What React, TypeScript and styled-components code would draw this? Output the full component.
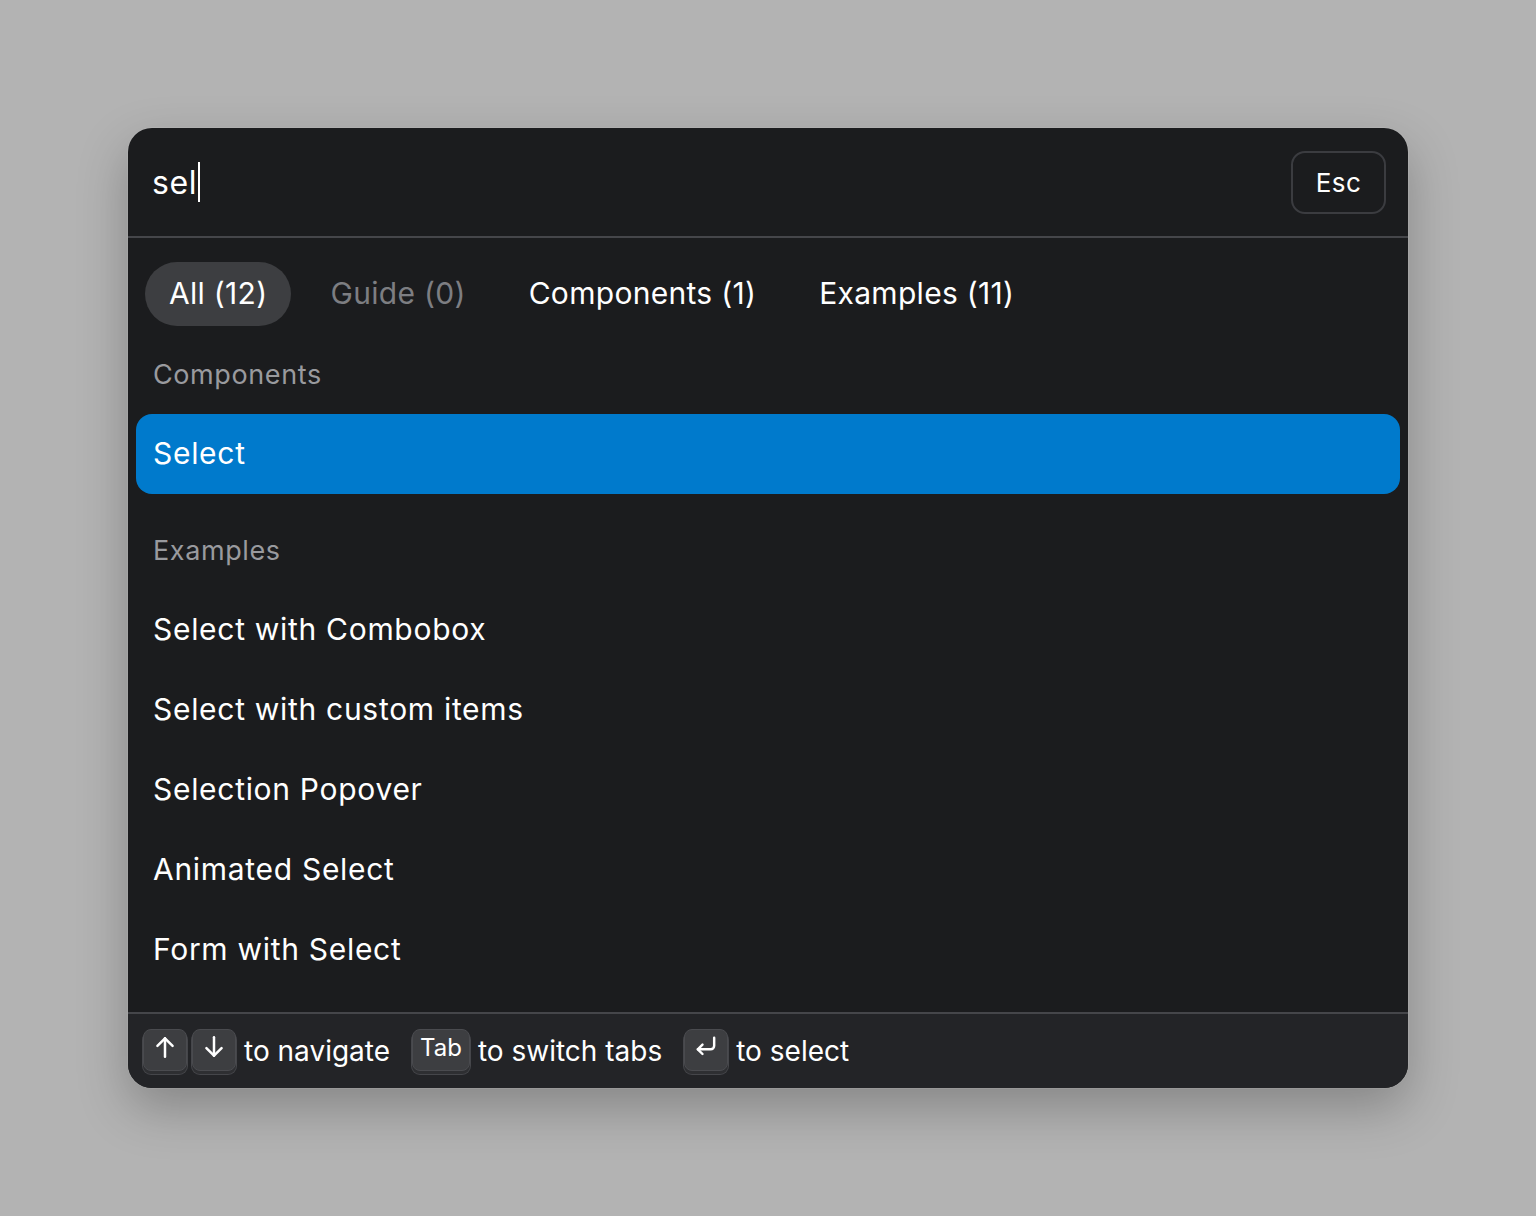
import styled, { createGlobalStyle } from "styled-components";

const GlobalStyle = createGlobalStyle`
  html, body {
    margin: 0;
    padding: 0;
    background: #b3b3b3;
    font-family: Inter, "Noto Sans", sans-serif;
  }
`;

const Page = styled.div`
  width: 1536px;
  height: 1216px;
  display: flex;
  align-items: flex-start;
  justify-content: center;
  padding-top: 128px;
  box-sizing: border-box;
`;

const Dialog = styled.div`
  width: 1280px;
  height: 960px;
  background: #1b1c1e;
  border-radius: 24px;
  box-shadow: 0 0 0 1px rgba(255, 255, 255, 0.08), 0 20px 50px rgba(0, 0, 0, 0.25);
  display: flex;
  flex-direction: column;
  overflow: hidden;
`;

const Header = styled.div`
  height: 108px;
  display: flex;
  align-items: center;
  justify-content: space-between;
  padding: 0 22px 0 24px;
  border-bottom: 2px solid #45464a;
  flex-shrink: 0;
`;

const InputText = styled.div`
  color: #ffffff;
  font-size: 32px;
  letter-spacing: 0.6px;
  display: flex;
  align-items: center;
`;

const Caret = styled.span`
  display: inline-block;
  width: 2px;
  height: 40px;
  background: #ffffff;
  margin-left: 1px;
`;

const EscButton = styled.div`
  width: 95px;
  height: 63px;
  box-sizing: border-box;
  border: 2px solid #3b3c40;
  border-radius: 14px;
  color: #ffffff;
  font-size: 26px;
  letter-spacing: 0.4px;
  display: flex;
  align-items: center;
  justify-content: center;
`;

const Body = styled.div`
  flex: 1;
  display: flex;
  flex-direction: column;
  padding: 24px 8px 0;
`;

const Tabs = styled.div`
  display: flex;
  gap: 15px;
  padding-left: 9px;
`;

const Tab = styled.div<{ $active?: boolean; $muted?: boolean }>`
  height: 64px;
  padding: 0 24px 3px;
  box-sizing: border-box;
  border-radius: 32px;
  display: flex;
  align-items: center;
  font-size: 30px;
  letter-spacing: 0.3px;
  color: ${(p) => (p.$muted ? "#7d7e82" : "#ffffff")};
  background: ${(p) => (p.$active ? "#3d3e41" : "transparent")};
`;

const SectionLabel = styled.div`
  height: 88px;
  box-sizing: border-box;
  display: flex;
  align-items: center;
  padding: 8px 0 0 17px;
  font-size: 27px;
  letter-spacing: 0.6px;
  color: #999a9e;
`;

const Item = styled.div<{ $selected?: boolean }>`
  height: 80px;
  box-sizing: border-box;
  display: flex;
  align-items: center;
  padding: 0 0 3px 17px;
  border-radius: 16px;
  font-size: 30px;
  letter-spacing: 0.7px;
  color: #ffffff;
  background: ${(p) => (p.$selected ? "#007acc" : "transparent")};
`;

const Gap = styled.div`
  height: 8px;
`;

const Footer = styled.div`
  height: 74px;
  flex-shrink: 0;
  background: #232427;
  border-top: 2px solid #45464a;
  display: flex;
  align-items: center;
  padding: 0 15px;
  gap: 22px;
  color: #ffffff;
  font-size: 28px;
`;

const Hint = styled.div`
  display: flex;
  align-items: center;
  gap: 8px;
`;

const Keys = styled.div`
  display: flex;
  gap: 5px;
`;

const Key = styled.div<{ $wide?: boolean }>`
  height: 42px;
  min-width: 44px;
  padding: 0 ${(p) => (p.$wide ? "7px" : "0")} 5px;
  box-sizing: border-box;
  border-radius: 8px;
  background: #3d3e41;
  border: 1px solid #4a4b4f;
  box-shadow: 0 3px 0 #2e2f32, 0 3px 0 1px #45464a;
  display: flex;
  align-items: center;
  justify-content: center;
  color: #ffffff;
  font-size: 24px;
  margin-bottom: 3px;
`;

const Arrow = ({ down }: { down?: boolean }) => (
  <svg width="26" height="26" viewBox="0 0 24 24" fill="none" stroke="#fff" strokeWidth="2.3" strokeLinecap="round" strokeLinejoin="round">
    {down ? (
      <>
        <path d="M12 3v17" />
        <path d="M5 13l7 7 7-7" />
      </>
    ) : (
      <>
        <path d="M12 21V4" />
        <path d="M5 11l7-7 7 7" />
      </>
    )}
  </svg>
);

const EnterIcon = () => (
  <svg width="28" height="28" viewBox="0 0 24 24" fill="none" stroke="#fff" strokeWidth="2.1" strokeLinecap="round" strokeLinejoin="round">
    <path d="M19 4v7a3 3 0 0 1-3 3H5" />
    <path d="M9 10l-4 4 4 4" />
  </svg>
);

const examples = [
  "Select with Combobox",
  "Select with custom items",
  "Selection Popover",
  "Animated Select",
  "Form with Select",
];

export default function App() {
  return (
    <>
      <GlobalStyle />
      <Page>
        <Dialog>
          <Header>
            <InputText>
              sel
              <Caret />
            </InputText>
            <EscButton>Esc</EscButton>
          </Header>
          <Body>
            <Tabs>
              <Tab $active>All (12)</Tab>
              <Tab $muted>Guide (0)</Tab>
              <Tab>Components (1)</Tab>
              <Tab>Examples (11)</Tab>
            </Tabs>
            <SectionLabel>Components</SectionLabel>
            <Item $selected>Select</Item>
            <Gap />
            <SectionLabel>Examples</SectionLabel>
            {examples.map((e) => (
              <Item key={e}>{e}</Item>
            ))}
          </Body>
          <Footer>
            <Hint>
              <Keys>
                <Key>
                  <Arrow />
                </Key>
                <Key>
                  <Arrow down />
                </Key>
              </Keys>
              to navigate
            </Hint>
            <Hint>
              <Key $wide>Tab</Key>
              to switch tabs
            </Hint>
            <Hint>
              <Key>
                <EnterIcon />
              </Key>
              to select
            </Hint>
          </Footer>
        </Dialog>
      </Page>
    </>
  );
}
